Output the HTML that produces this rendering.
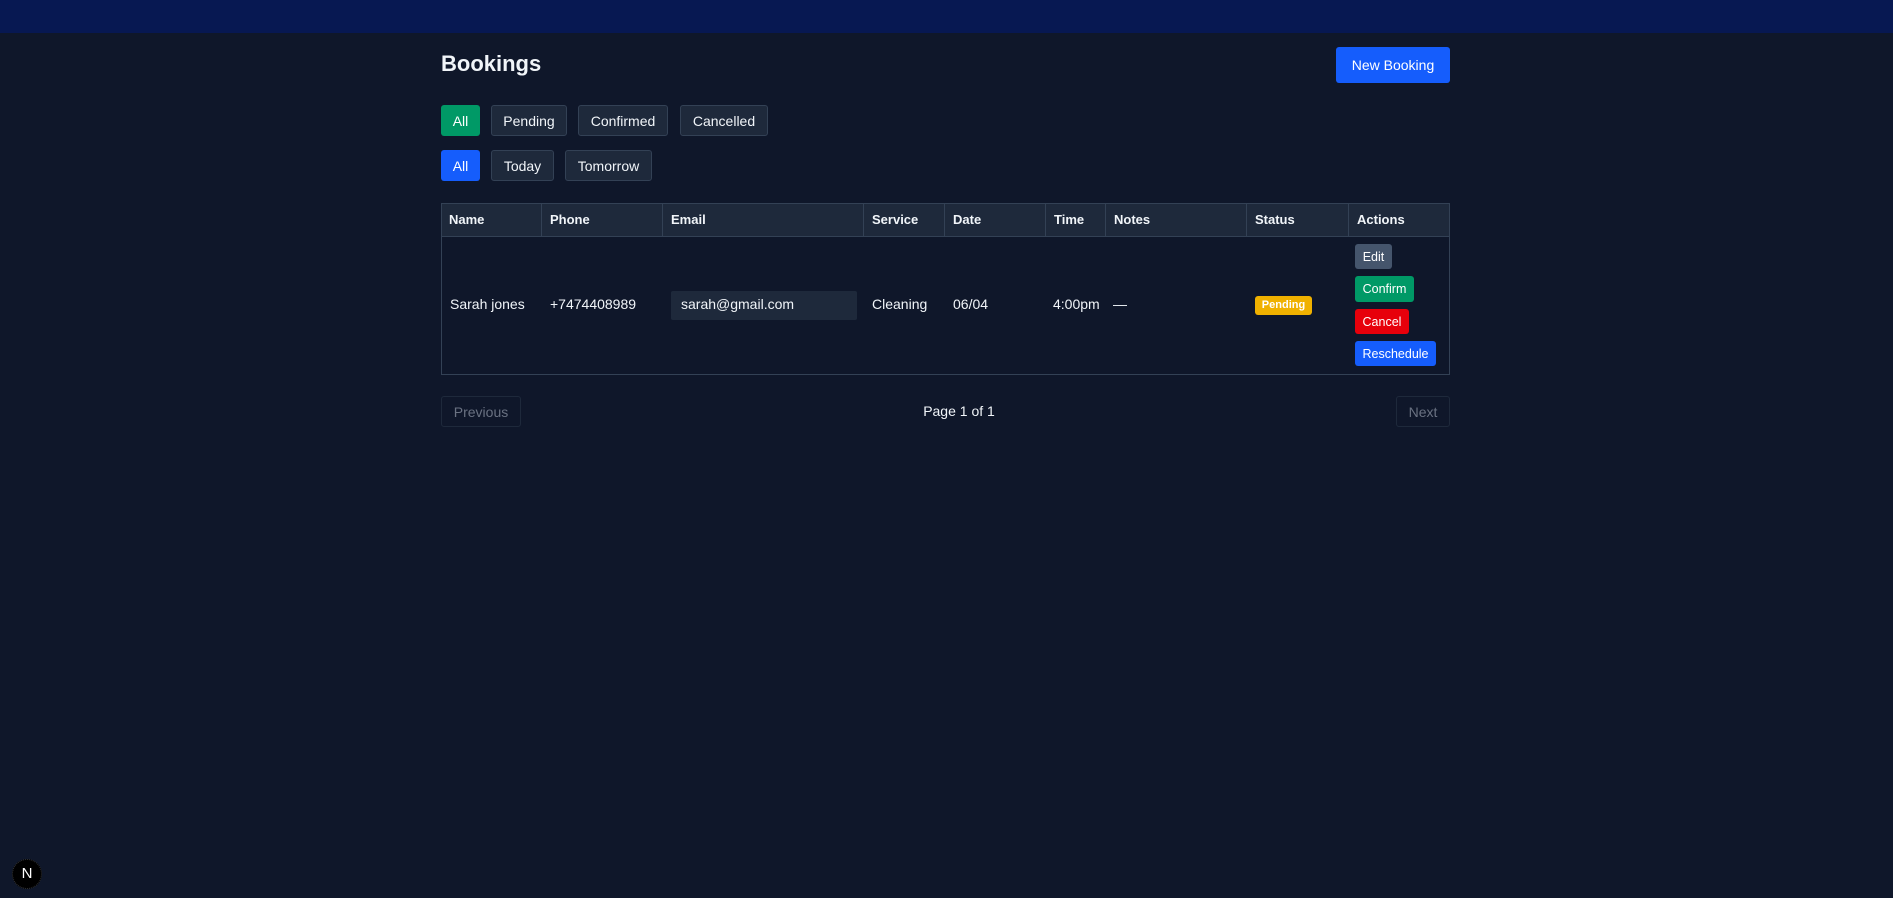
<!DOCTYPE html>
<html><head><meta charset="utf-8"><style>
*{box-sizing:border-box;margin:0;padding:0}
body{width:1893px;height:898px;background:#0f172a;font-family:"Liberation Sans",sans-serif;color:#f1f5f9;position:relative;overflow:hidden}
.band{position:absolute;left:0;top:0;width:1893px;height:33px;background:#071852}
.a{position:absolute}
.btn{position:absolute;border-radius:3px;display:flex;align-items:center;justify-content:center;font-size:14px;color:#f1f5f9}
.f{background:#1e293b;border:1px solid #334155}
.th{position:absolute;top:203px;height:34px;line-height:34px;font-size:13px;font-weight:bold;padding-left:8px;border-right:1px solid #334155}
.td{position:absolute;top:292px;font-size:14px;line-height:24px}
.ab{position:absolute;left:1355px;height:26px;border-radius:3px;font-size:12.5px;color:#fff;display:flex;align-items:center;justify-content:center}
</style></head><body>
<div class="band"></div>
<div class="a" style="left:441px;top:51px;font-size:22px;font-weight:bold">Bookings</div>
<div class="btn" style="left:1336px;top:47px;width:114px;height:36px;background:#155dfc;color:#fff">New Booking</div>

<div class="btn" style="left:441px;top:105px;width:39px;height:31px;background:#009966;color:#fff">All</div>
<div class="btn f" style="left:491px;top:105px;width:76px;height:31px">Pending</div>
<div class="btn f" style="left:578px;top:105px;width:90px;height:31px">Confirmed</div>
<div class="btn f" style="left:680px;top:105px;width:88px;height:31px">Cancelled</div>

<div class="btn" style="left:441px;top:150px;width:39px;height:31px;background:#155dfc;color:#fff">All</div>
<div class="btn f" style="left:491px;top:150px;width:63px;height:31px">Today</div>
<div class="btn f" style="left:565px;top:150px;width:87px;height:31px">Tomorrow</div>

<div class="a" style="left:441px;top:203px;width:1009px;height:172px;border:1px solid #334155"></div>
<div class="a" style="left:442px;top:204px;width:1007px;height:33px;background:#1e293b;border-bottom:1px solid #334155"></div>
<div class="th" style="left:441px;width:101px">Name</div>
<div class="th" style="left:542px;width:121px">Phone</div>
<div class="th" style="left:663px;width:201px">Email</div>
<div class="th" style="left:864px;width:81px">Service</div>
<div class="th" style="left:945px;width:101px">Date</div>
<div class="th" style="left:1046px;width:60px">Time</div>
<div class="th" style="left:1106px;width:141px">Notes</div>
<div class="th" style="left:1247px;width:102px">Status</div>
<div class="th" style="left:1349px;width:100px;border-right:none">Actions</div>

<div class="td" style="left:450px">Sarah jones</div>
<div class="td" style="left:550px">+7474408989</div>
<div class="a" style="left:671px;top:291px;width:186px;height:29px;background:#1e293b;border-radius:2px;font-size:14px;line-height:27px;padding-left:10px">sarah@gmail.com</div>
<div class="td" style="left:872px">Cleaning</div>
<div class="td" style="left:953px">06/04</div>
<div class="td" style="left:1053px">4:00pm</div>
<div class="td" style="left:1113px">—</div>
<div class="a" style="left:1255px;top:296px;width:57px;height:19px;background:#f0b100;border-radius:3px;font-size:11px;font-weight:bold;color:#fff;text-align:center;line-height:19px">Pending</div>

<div class="ab" style="top:244px;width:37px;height:25px;background:#45556c">Edit</div>
<div class="ab" style="top:276px;width:59px;background:#009966">Confirm</div>
<div class="ab" style="top:309px;width:54px;height:25px;background:#e7000b">Cancel</div>
<div class="ab" style="top:341px;width:81px;height:25px;background:#155dfc">Reschedule</div>

<div class="btn" style="left:441px;top:396px;width:80px;height:31px;border:1px solid #1e293b;color:#6a7282">Previous</div>
<div class="a" style="left:900px;top:403px;width:118px;text-align:center;font-size:14px">Page 1 of 1</div>
<div class="btn" style="left:1396px;top:396px;width:54px;height:31px;border:1px solid #1e293b;color:#6a7282">Next</div>

<div class="a" style="left:12px;top:859px;width:30px;height:30px;border-radius:50%;background:#000;border:1px dotted #333;color:#fff;font-size:15px;text-align:center;line-height:28px">N</div>
</body></html>
